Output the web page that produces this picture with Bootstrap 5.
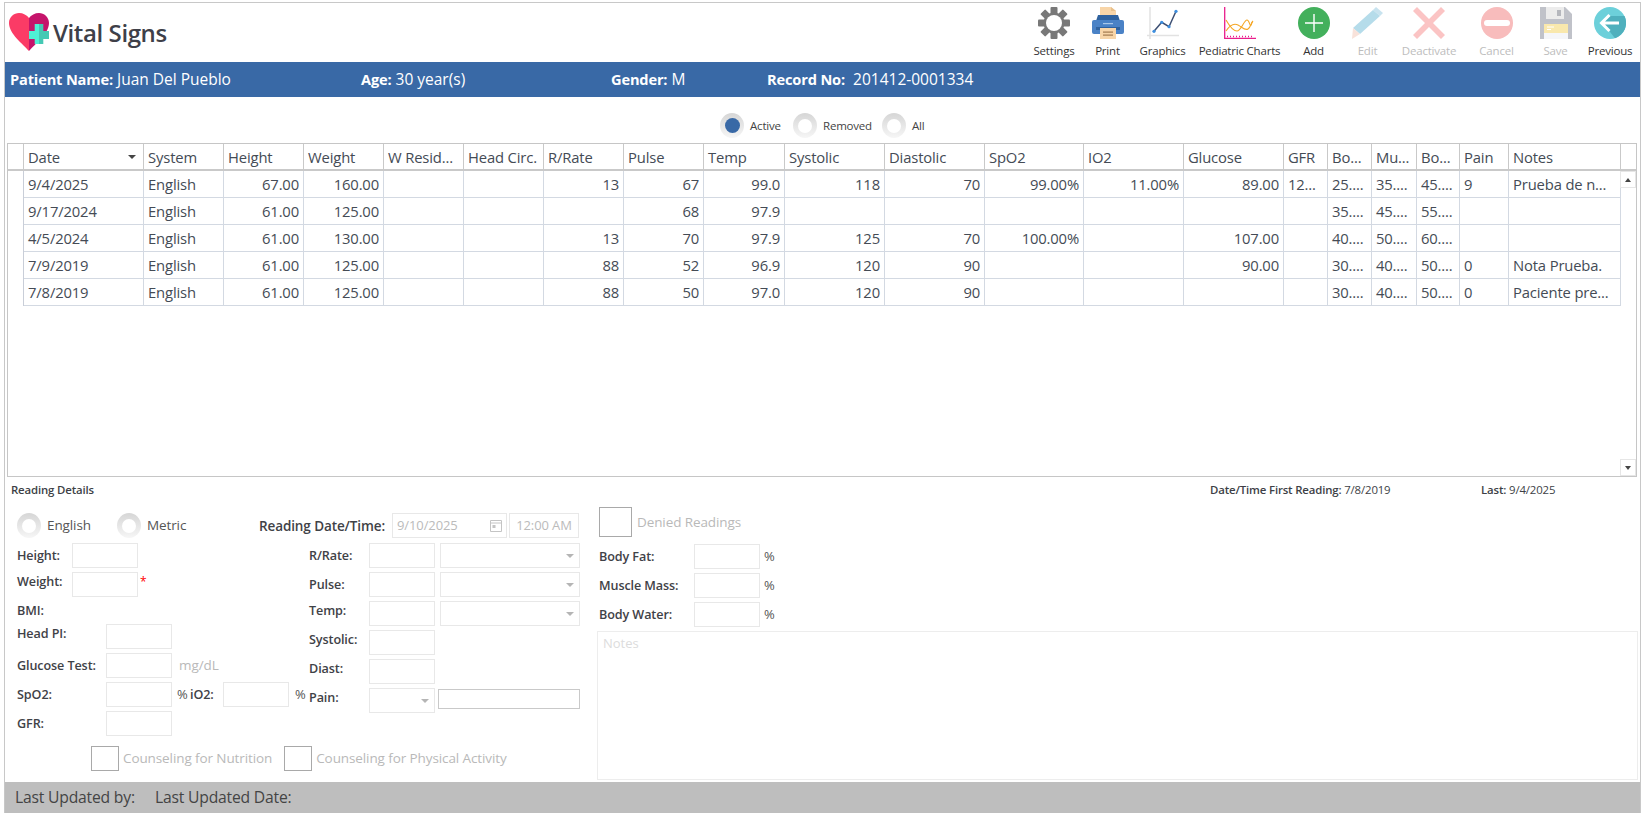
<!DOCTYPE html>
<html lang="en">
<head>
<meta charset="utf-8">
<title>Vital Signs</title>
<link rel="stylesheet" href="https://cdn.jsdelivr.net/npm/bootstrap@5.3.0/dist/css/bootstrap.min.css">
<style>
html,body{height:817px;overflow:hidden;background:#fff;font-family:"Open Sans","Noto Sans",sans-serif;color:#43474e}
.vs-app{margin:2px 1px 0 4px;height:811px;border:1px solid #c8c8c8;border-bottom:0;display:flex;flex-direction:column}
.vs-head{height:59px;flex:none}
.vs-title{font-size:24px;font-weight:600;letter-spacing:-.4px;color:#3e4048;line-height:1;margin-left:0}
.vs-logo{width:40px;height:38px;margin:10px 4px 0 4px;display:block}
.vs-nav{padding-right:3px}
.tb-item{display:flex;flex-direction:column;align-items:center;padding-top:4px;font-size:11.5px;letter-spacing:-.2px;color:#333;white-space:nowrap;line-height:1}
.tb-item svg{width:32px;height:32px;display:block;margin-bottom:6px}
.tb-item.off{color:#bdbdbd}
.tb-item:nth-child(1){width:54px}.tb-item:nth-child(2){width:53px}.tb-item:nth-child(3){width:57px}.tb-item:nth-child(4){width:97px}.tb-item:nth-child(5){width:51px}.tb-item:nth-child(6){width:57px}.tb-item:nth-child(7){width:66px}.tb-item:nth-child(8){width:69px}.tb-item:nth-child(9){width:49px;margin-right:3px}.tb-item:nth-child(10){width:54px}
.vs-bar{height:35px;flex:none;background:#3969a6;color:#fff;font-size:15.5px;padding-left:5px}
.vs-bar b{font-weight:700;font-size:14.6px;letter-spacing:-.15px}
.bar-a{width:351px}.bar-b{width:250px}.bar-c{width:156px}
.vs-filter{height:46px;flex:none;font-size:11.500px;letter-spacing:-.2px;color:#444;padding-left:715px;padding-top:16px}
.rd{width:24px;height:25px;border-radius:50%;background:linear-gradient(#d6d6d6,#f6f6f6);display:inline-flex;align-items:center;justify-content:center;flex:none}
.rd::after{content:"";width:14px;height:14px;border-radius:50%;background:#fff}
.rd.on::after{background:#3969a6;width:15px;height:15px}
.vs-filter .rd{margin-right:6px}
.fl-a{width:73px}.fl-b{width:89px}
.vs-gridbox{height:334px;flex:none;margin-left:2px;margin-right:3px;border:1px solid #c6c6c6;position:relative;overflow:hidden}
table.vs-grid{table-layout:fixed;width:1629px;margin:0;border-collapse:separate;border-spacing:0;font-size:14.8px;color:#444b55;letter-spacing:-.15px}
table.vs-grid>thead>tr>th{font-weight:400;height:27px;padding:2px 4px 0 4px;border:0;border-right:1px solid #c9c9c9;border-bottom:2px solid #c9c9c9;vertical-align:middle;white-space:nowrap;overflow:hidden;position:relative}
table.vs-grid>tbody>tr>td{height:27px;padding:0 4px;border:0;border-right:1px solid #d3d9e2;border-bottom:1px solid #d3d9e2;vertical-align:middle;white-space:nowrap;overflow:hidden;background:transparent}
table.vs-grid>tbody>tr>td.g0{border-bottom:0;border-right:1px solid #c9ced8}
table.vs-grid>tbody>tr>td.gz{border:0}
.sort-caret{position:absolute;right:7px;top:11px;width:0;height:0;border:4px solid transparent;border-top:4px solid #444;border-bottom:0}
.sb-up,.sb-dn{position:absolute;right:0;width:16px;height:17px;background:#fff;border:1px solid #e6e6e6;display:flex;align-items:center;justify-content:center}
.sb-up{top:27px}.sb-dn{bottom:0}
.sb-up::after{content:"";border:3px solid transparent;border-bottom:4px solid #444;border-top:0}
.sb-dn::after{content:"";border:3px solid transparent;border-top:4px solid #444;border-bottom:0}
.vs-dtitle{height:26px;flex:none;font-size:11.4px;font-weight:600;letter-spacing:-.15px;color:#3d3f46}
.vs-dtitle .ps{padding-left:6px}
.dt-first{margin-left:auto;width:271px;white-space:nowrap}
.dt-last{width:159px;white-space:nowrap}
.dt-val{font-weight:400}
.vs-detail{flex:1 1 auto;min-height:0}
.vs-left{width:592px;flex:none;padding-left:12px}
.vs-top{height:25px;margin-top:10px;font-size:13px;letter-spacing:-.1px}
.lbl{font-size:12.6px;font-weight:600;letter-spacing:-.1px;color:#3f4247;white-space:nowrap;padding-top:1px}
.dis{color:#b9b9b9;font-size:13.500px;letter-spacing:-.1px;white-space:nowrap}
.rd-t{margin-left:6px;margin-right:26px;color:#555;font-size:13.500px}
.rd-t2{margin-left:6px;color:#555;font-size:13.500px}
.lbl.lbl-rdt{margin-left:auto;margin-right:7px;font-size:13.500px}
.fld{width:66px;height:25px;min-height:0;padding:0 5px;border:1px solid #e8e8e8;border-radius:0;background:#fff;font-size:13px;color:#bbb;flex:none}
.fld:disabled{background:#fff;color:#bbb;opacity:1}
.fld-date{width:115px;height:25px;margin-right:2px;display:flex;align-items:center;justify-content:space-between;border:1px solid #e8e8e8;padding:0 4px;color:#bbb;font-size:13px}
.fld-time{width:70px;height:25px;margin-right:18px;display:flex;align-items:center;justify-content:center;border:1px solid #e8e8e8;color:#bbb;font-size:13px}
.vs-cols{margin-top:5px}
.col-a{width:292px;flex:none}
.col-b{width:271px;flex:none}
.fr{height:25px;margin-bottom:4px}
.fr-bmi{height:19px;margin-bottom:4px}
.up{padding-bottom:5px}
.w-a{width:55px;flex:none}
.w-b{width:89px;flex:none}
.w-c{width:60px;flex:none}
.pct{font-size:13px;color:#555}
.pct-a{margin-left:5px;width:13px}
.pct-b{margin-left:6px}
.lbl-io{width:33px}
.req{color:#f00;font-size:12px;margin-left:2px;line-height:1}
.unit{margin-left:7px}
.sel{width:140px;height:25px;margin-left:5px;border:1px solid #e8e8e8;display:flex;align-items:center;justify-content:flex-end;padding-right:5px;flex:none}
.sel::after{content:"";border:4px solid transparent;border-top:4px solid #b5b5b5;border-bottom:0}
.sel-s{width:66px;margin-left:0}
.fld-pain{width:142px;height:20px;margin-left:3px;margin-bottom:4px;border:1px solid #c9c9c9}
.vs-couns{margin:6px 0 0 74px;height:25px}
.ck{width:28px;height:25px;margin:0;border:1px solid #a9a9a9;border-radius:0;background:#fff;flex:none;appearance:none}
.ck-t{margin-left:4px;margin-right:12px}
.vs-right{flex:1 1 auto;min-width:0;margin-right:2px}
.den{height:30px;margin:4px 0 0 2px}
.den .ck{width:33px;height:30px}
.den .ck-t{margin-left:5px}
.vs-bf{margin-left:2px}
.bf-rows{margin-top:7px}
.w-d{width:95px;flex:none}
.pct-c{margin-left:4px}
.vs-notes{width:100%;height:149px;margin-top:2px;padding:2px 5px;border:1px solid #ededed;border-radius:0;font-size:13px;resize:none;background:#fff}
.vs-notes::placeholder{color:#dcdcdc}
.vs-notes:disabled{background:#fff}
.vs-foot{height:31px;flex:none;background:#bebebe;color:#444;font-size:15.700px;letter-spacing:-.2px;padding-left:10px;margin-top:2px}
.ft-a{width:140px}
</style>
</head>
<body class="m-0">
<div class="vs-app">
  <header class="vs-head d-flex">
    <svg class="vs-logo" viewBox="0 0 40 38" aria-hidden="true">
      <path d="M20 38 C14 31 0 21 0 10 C0 4 5 0 10 0 C14 0 18 2 20 5 Z" fill="#fb3b66"/>
      <path d="M20 38 C26 31 40 21 40 10 C40 4 35 0 30 0 C26 0 22 2 20 5 Z" fill="#c5146b"/>
      <path d="M30 11h4.300v7H40v8h-5.700v5H30z" fill="#45c9b4"/>
      <path d="M25.700 11H30v20h-4.300v-5H20v-8h5.700z" fill="#4ff0d5"/>
    </svg>
    <div class="vs-title d-flex align-items-center">Vital Signs</div>
    <nav class="vs-nav ms-auto d-flex">
      <div class="tb-item"><svg viewBox="0 0 32 32"><g fill="#787878"><rect x="12.500" y="0" width="7" height="32" rx="1"/><rect x="12.500" y="0" width="7" height="32" rx="1" transform="rotate(45 16 16)"/><rect x="12.500" y="0" width="7" height="32" rx="1" transform="rotate(90 16 16)"/><rect x="12.500" y="0" width="7" height="32" rx="1" transform="rotate(135 16 16)"/></g><circle cx="16" cy="16" r="10.500" fill="#787878"/><circle cx="16" cy="16" r="8" fill="#fff"/></svg>Settings</div>
      <div class="tb-item"><svg viewBox="0 0 32 32"><path d="M8 0h11l5 4v8H8z" fill="#f8d5a8"/><path d="M19 0l5 4h-5z" fill="#e8c08c"/><path d="M6 8h20l2 6H4z" fill="#2f629f"/><path d="M2 13h28a2 2 0 0 1 2 2v10a2 2 0 0 1-2 2H2a2 2 0 0 1-2-2V15a2 2 0 0 1 2-2z" fill="#4a82c6"/><rect x="4" y="20" width="24" height="3" fill="#2f629f"/><rect x="11" y="16" width="10" height="1.200" fill="#a9c8ea"/><rect x="8" y="21" width="16" height="11" fill="#f8d5a8"/><rect x="11" y="24.500" width="10" height="1.200" fill="#a37b50"/><rect x="11" y="27.500" width="10" height="1.200" fill="#a37b50"/></svg>Print</div>
      <div class="tb-item"><svg viewBox="0 0 32 32"><path d="M3 0v32M0 28.500h32" stroke="#e2e2e2" stroke-width="1.500" fill="none"/><path d="M7 24.300L14.700 15.300L22 19.700L29 4.300" stroke="#3c4f73" stroke-width="1.500" fill="none"/><g fill="#3d8fe0"><circle cx="7" cy="24.300" r="1.600"/><circle cx="14.700" cy="15.300" r="1.600"/><circle cx="22" cy="19.700" r="1.600"/><circle cx="29" cy="4.300" r="1.600"/></g></svg>Graphics</div>
      <div class="tb-item"><svg viewBox="0 0 32 32"><path d="M.7 0v31.300H32" stroke="#e91e8c" stroke-width="1.300" fill="none"/><path d="M3 29.500h27" stroke="#e91e8c" stroke-width="1.500" stroke-dasharray="1 2" fill="none"/><path d="M2 13C6 20 9 24 13 24S20 13 23 13 26 24 28 15" stroke="#f5a623" stroke-width="1.100" fill="none"/><path d="M2 24C6 18 10 16 14 18S21 24 24 22 27 16 29 14" stroke="#f5a623" stroke-width="1.100" fill="none"/></svg>Pediatric Charts</div>
      <div class="tb-item"><svg viewBox="0 0 32 32"><circle cx="16" cy="16" r="16" fill="#43b05c"/><path d="M16 7v18M7 16h18" stroke="#fff" stroke-width="1.400"/></svg>Add</div>
      <div class="tb-item off"><svg viewBox="0 0 32 32"><path d="M24 0l7 6-3 3-7-6z" fill="#c8e3ef"/><path d="M21 3l7 6L8 27l-7-6z" fill="#b5dcea"/><path d="M1 21l7 6-8 5z" fill="#f8e2da"/></svg>Edit</div>
      <div class="tb-item off"><svg viewBox="0 0 32 32"><path d="M4 0l12 12L28 0l4 4-12 12 12 12-4 4-12-12L4 32l-4-4 12-12L0 4z" fill="#fbc4c4"/></svg>Deactivate</div>
      <div class="tb-item off"><svg viewBox="0 0 32 32"><circle cx="16" cy="16" r="16" fill="#f8bcbc"/><rect x="3" y="13" width="26" height="6" rx="3" fill="#fff"/></svg>Cancel</div>
      <div class="tb-item off"><svg viewBox="0 0 32 32"><path d="M0 0h25l7 7v25H0z" fill="#c0c2c9"/><path d="M6 0h18v12H6z" fill="#ececec"/><rect x="17" y="3" width="4" height="6" fill="#b5b7bd"/><rect x="4" y="17" width="24" height="15" fill="#f5f6f9"/><rect x="4" y="17" width="24" height="9" fill="#f9e8ad"/><path d="M7 20h7M7 22.500h4" stroke="#fff" stroke-width="1"/></svg>Save</div>
      <div class="tb-item"><svg viewBox="0 0 32 32"><circle cx="16" cy="16" r="16" fill="#6cd0da"/><path d="M9 16l7-7h14.500A16 16 0 0 1 21 31.200z" fill="#4fb0bd"/><path d="M15.500 8L7.500 16l8 8M8 16h17" fill="none" stroke="#fff" stroke-width="3"/></svg>Previous</div>
    </nav>
  </header>

  <div class="vs-bar d-flex align-items-center">
    <div class="bar-a"><b>Patient Name:</b> Juan Del Pueblo</div>
    <div class="bar-b"><b>Age:</b> 30 year(s)</div>
    <div class="bar-c"><b>Gender:</b> M</div>
    <div><b>Record No:</b>&nbsp; 201412-0001334</div>
  </div>

  <div class="vs-filter d-flex align-items-start">
    <div class="fl-a d-flex align-items-center"><span class="rd on"></span>Active</div>
    <div class="fl-b d-flex align-items-center"><span class="rd"></span>Removed</div>
    <div class="d-flex align-items-center"><span class="rd"></span>All</div>
  </div>

  <div class="vs-gridbox">
    <table class="table vs-grid">
      <colgroup><col style="width:16px"><col style="width:120px"><col style="width:80px"><col style="width:80px"><col style="width:80px"><col style="width:80px"><col style="width:80px"><col style="width:80px"><col style="width:80px"><col style="width:81px"><col style="width:100px"><col style="width:100px"><col style="width:99px"><col style="width:100px"><col style="width:100px"><col style="width:44px"><col style="width:44px"><col style="width:45px"><col style="width:43px"><col style="width:49px"><col style="width:112px"><col style="width:16px"></colgroup>
      <thead><tr><th></th><th>Date<span class="sort-caret"></span></th><th>System</th><th>Height</th><th>Weight</th><th>W Resid...</th><th>Head Circ.</th><th>R/Rate</th><th>Pulse</th><th>Temp</th><th>Systolic</th><th>Diastolic</th><th>SpO2</th><th>IO2</th><th>Glucose</th><th>GFR</th><th>Bo...</th><th>Mu...</th><th>Bo...</th><th>Pain</th><th>Notes</th><th></th></tr></thead>
      <tbody>
        <tr><td class="g0"></td><td>9/4/2025</td><td>English</td><td class="text-end">67.00</td><td class="text-end">160.00</td><td></td><td></td><td class="text-end">13</td><td class="text-end">67</td><td class="text-end">99.0</td><td class="text-end">118</td><td class="text-end">70</td><td class="text-end">99.00%</td><td class="text-end">11.00%</td><td class="text-end">89.00</td><td>12...</td><td>25....</td><td>35....</td><td>45....</td><td>9</td><td>Prueba de n...</td><td class="gz"></td></tr>
        <tr><td class="g0"></td><td>9/17/2024</td><td>English</td><td class="text-end">61.00</td><td class="text-end">125.00</td><td></td><td></td><td class="text-end"></td><td class="text-end">68</td><td class="text-end">97.9</td><td></td><td></td><td></td><td></td><td></td><td></td><td>35....</td><td>45....</td><td>55....</td><td></td><td></td><td class="gz"></td></tr>
        <tr><td class="g0"></td><td>4/5/2024</td><td>English</td><td class="text-end">61.00</td><td class="text-end">130.00</td><td></td><td></td><td class="text-end">13</td><td class="text-end">70</td><td class="text-end">97.9</td><td class="text-end">125</td><td class="text-end">70</td><td class="text-end">100.00%</td><td></td><td class="text-end">107.00</td><td></td><td>40....</td><td>50....</td><td>60....</td><td></td><td></td><td class="gz"></td></tr>
        <tr><td class="g0"></td><td>7/9/2019</td><td>English</td><td class="text-end">61.00</td><td class="text-end">125.00</td><td></td><td></td><td class="text-end">88</td><td class="text-end">52</td><td class="text-end">96.9</td><td class="text-end">120</td><td class="text-end">90</td><td></td><td></td><td class="text-end">90.00</td><td></td><td>30....</td><td>40....</td><td>50....</td><td>0</td><td>Nota Prueba.</td><td class="gz"></td></tr>
        <tr><td class="g0"></td><td>7/8/2019</td><td>English</td><td class="text-end">61.00</td><td class="text-end">125.00</td><td></td><td></td><td class="text-end">88</td><td class="text-end">50</td><td class="text-end">97.0</td><td class="text-end">120</td><td class="text-end">90</td><td></td><td></td><td></td><td></td><td>30....</td><td>40....</td><td>50....</td><td>0</td><td>Paciente pre...</td><td class="gz"></td></tr>
      </tbody>
    </table>
    <div class="sb-up"></div><div class="sb-dn"></div>
  </div>

  <div class="vs-dtitle d-flex align-items-center">
    <div class="ps">Reading Details</div>
    <div class="dt-first">Date/Time First Reading: <span class="dt-val">7/8/2019</span></div>
    <div class="dt-last">Last: <span class="dt-val">9/4/2025</span></div>
  </div>

  <div class="vs-detail d-flex">
    <section class="vs-left">
      <div class="vs-top d-flex align-items-center">
        <span class="rd"></span><span class="rd-t">English</span>
        <span class="rd"></span><span class="rd-t2">Metric</span>
        <span class="lbl lbl-rdt">Reading Date/Time:</span>
        <div class="fld-date"><span>9/10/2025</span><svg width="12" height="13" viewBox="0 0 12 13"><path d="M.5 1.500h11v11H.5zM.5 4h11" fill="none" stroke="#c4c4c4"/><rect x="2.500" y="6" width="3" height="3" fill="#c4c4c4"/></svg></div>
        <div class="fld-time">12:00 AM</div>
      </div>
      <div class="vs-cols d-flex">
        <div class="col-a">
          <div class="fr d-flex align-items-center"><span class="lbl w-a">Height:</span><input class="form-control fld" disabled></div>
          <div class="fr d-flex align-items-center"><span class="lbl w-a up">Weight:</span><input class="form-control fld" disabled><span class="req up">*</span></div>
          <div class="fr-bmi d-flex align-items-center"><span class="lbl">BMI:</span></div>
          <div class="fr d-flex align-items-center"><span class="lbl w-b up">Head PI:</span><input class="form-control fld" disabled></div>
          <div class="fr d-flex align-items-center"><span class="lbl w-b">Glucose Test:</span><input class="form-control fld" disabled><span class="dis unit">mg/dL</span></div>
          <div class="fr d-flex align-items-center"><span class="lbl w-b">SpO2:</span><input class="form-control fld" disabled><span class="pct pct-a">%</span><span class="lbl lbl-io">iO2:</span><input class="form-control fld" disabled><span class="pct pct-b">%</span></div>
          <div class="fr d-flex align-items-center"><span class="lbl w-b">GFR:</span><input class="form-control fld" disabled></div>
        </div>
        <div class="col-b">
          <div class="fr d-flex align-items-center"><span class="lbl w-c">R/Rate:</span><input class="form-control fld" disabled><div class="sel"></div></div>
          <div class="fr d-flex align-items-center"><span class="lbl w-c">Pulse:</span><input class="form-control fld" disabled><div class="sel"></div></div>
          <div class="fr d-flex align-items-center"><span class="lbl w-c up">Temp:</span><input class="form-control fld" disabled><div class="sel"></div></div>
          <div class="fr d-flex align-items-center"><span class="lbl w-c up">Systolic:</span><input class="form-control fld" disabled></div>
          <div class="fr d-flex align-items-center"><span class="lbl w-c up">Diast:</span><input class="form-control fld" disabled></div>
          <div class="fr d-flex align-items-center"><span class="lbl w-c up">Pain:</span><div class="sel sel-s"></div><input class="form-control fld fld-pain" disabled></div>
        </div>
      </div>
      <div class="vs-couns d-flex align-items-center dis">
        <input type="checkbox" class="ck" disabled><span class="ck-t">Counseling for Nutrition</span>
        <input type="checkbox" class="ck" disabled><span class="ck-t">Counseling for Physical Activity</span>
      </div>
    </section>
    <section class="vs-right">
      <div class="den d-flex align-items-center dis"><input type="checkbox" class="ck" disabled><span class="ck-t">Denied Readings</span></div>
      <div class="vs-bf bf-rows">
        <div class="fr d-flex align-items-center"><span class="lbl w-d">Body Fat:</span><input class="form-control fld" disabled><span class="pct pct-c">%</span></div>
        <div class="fr d-flex align-items-center"><span class="lbl w-d">Muscle Mass:</span><input class="form-control fld" disabled><span class="pct pct-c">%</span></div>
        <div class="fr d-flex align-items-center"><span class="lbl w-d">Body Water:</span><input class="form-control fld" disabled><span class="pct pct-c">%</span></div>
      </div>
      <textarea class="form-control vs-notes" placeholder="Notes" disabled></textarea>
    </section>
  </div>

  <footer class="vs-foot d-flex align-items-center">
    <div class="ft-a">Last Updated by:</div>
    <div>Last Updated Date:</div>
  </footer>
</div>
<script src="https://cdn.jsdelivr.net/npm/bootstrap@5.3.0/dist/js/bootstrap.bundle.min.js"></script>
</body>
</html>
